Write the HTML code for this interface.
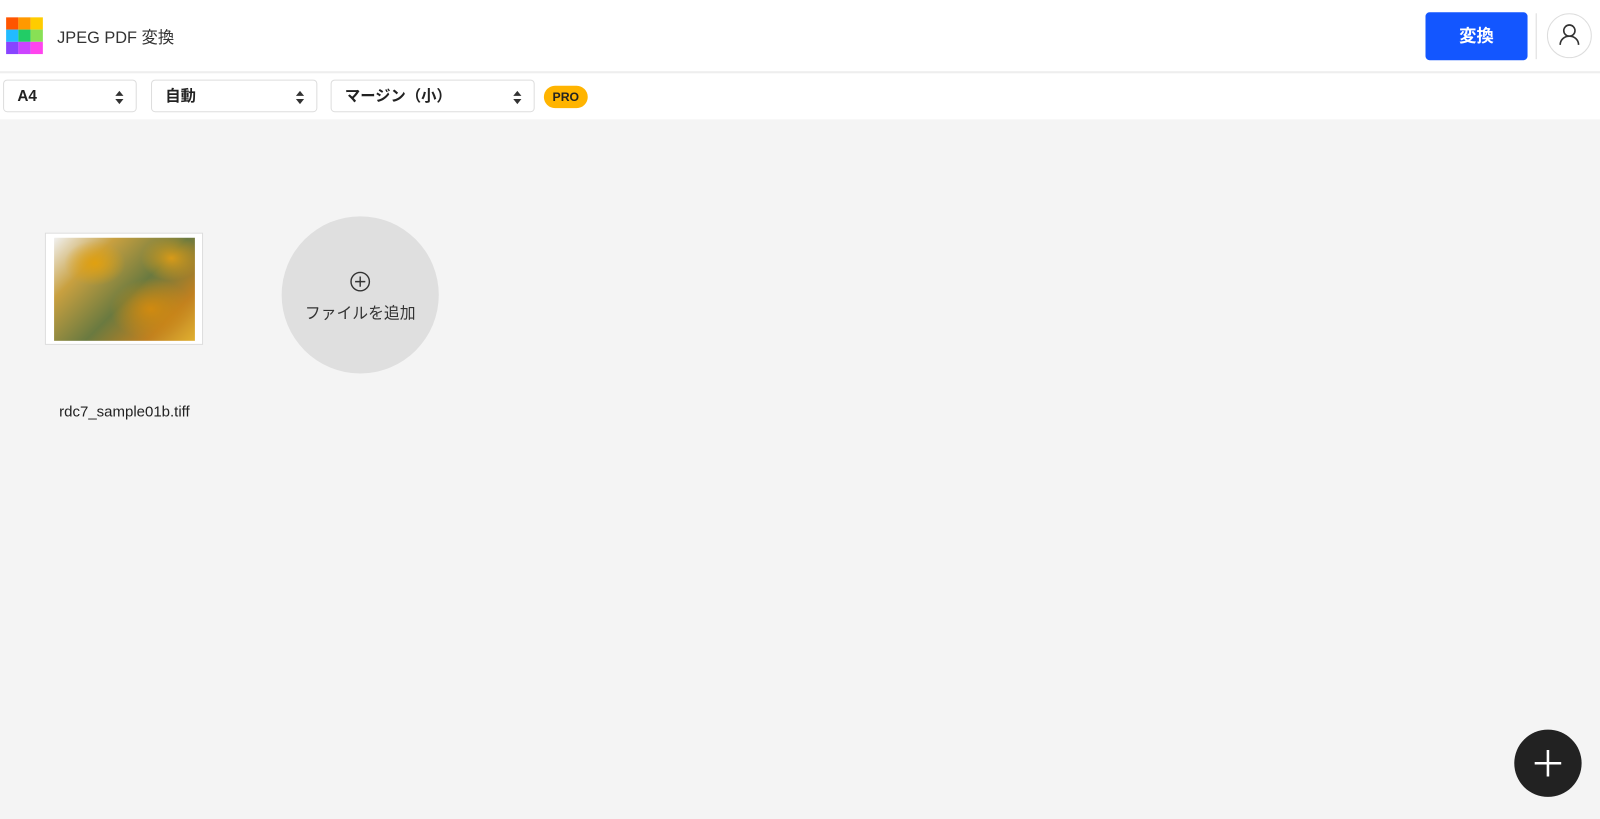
<!DOCTYPE html>
<html><head><meta charset="utf-8"><style>
*{box-sizing:border-box;margin:0;padding:0}
body{width:1600px;height:819px;background:#f4f4f4;font-family:"Liberation Sans","Noto Sans CJK JP",sans-serif;position:relative;overflow:hidden;color:#222}
.w{position:absolute;left:0;top:0;width:1568px;height:803px;transform:scale(1.0204);transform-origin:0 0}
.hdr{position:absolute;left:0;top:0;width:1568px;height:71px;background:#fff;border-bottom:1px solid #e6e6e6}
.logo{position:absolute;left:6px;top:17px;width:36px;height:36px;display:grid;grid-template-columns:repeat(3,12px)}
.title{position:absolute;left:56px;top:23px;font-size:16px;color:#333}
.btn{position:absolute;left:1397px;top:12px;width:100px;height:47px;background:#1356ff;border-radius:4px;color:#fff;font-size:17px;font-weight:bold;text-align:center;line-height:47px}
.sep{position:absolute;left:1505px;top:13px;width:1px;height:45px;background:#ddd}
.av{position:absolute;left:1516px;top:13px;width:44px;height:44px;border:1px solid #ddd;border-radius:50%}
.tb{position:absolute;left:0;top:72px;width:1568px;height:45px;background:#fff}
.sel{position:absolute;top:6px;height:32px;border:1px solid #ddd;border-radius:4px;font-size:15px;font-weight:bold;line-height:31px;padding-left:13px}
.sel::after{content:"";position:absolute;right:12px;top:10px;border:4px solid transparent;border-bottom:5px solid #333;border-top:0}
.sel::before{content:"";position:absolute;right:12px;top:18px;border:4px solid transparent;border-top:5px solid #333;border-bottom:0}
.pro{position:absolute;left:533px;top:12px;width:43px;height:22px;background:#ffb400;border-radius:11px;font-size:12px;font-weight:bold;text-align:center;line-height:22px;color:#222}
.thumb{position:absolute;left:44px;top:228px;width:155px;height:110px;background:#fff;border:1px solid #ddd}
.img{position:absolute;left:8px;top:4px;width:138px;height:101px;background:
radial-gradient(ellipse 40px 30px at 95px 70px,#d08a10,transparent),
radial-gradient(ellipse 30px 22px at 40px 25px,#e0a010,transparent),
radial-gradient(ellipse 30px 22px at 115px 20px,#d89a18,transparent),
linear-gradient(135deg,#f0f0f0 0%,#c8a040 25%,#6a7a40 55%,#c08020 80%,#e0b030 100%)}
.fn{position:absolute;left:58px;top:396px;font-size:14.7px;color:#222}
.add{position:absolute;left:276px;top:212px;width:154px;height:154px;border-radius:50%;background:#dfdfdf;text-align:center}
.add .t{position:absolute;top:83px;width:100%;font-size:15.5px;color:#333}
.fab{position:absolute;left:1484px;top:715px;width:66px;height:66px;border-radius:50%;background:#222}
</style></head><body><div class="w">
<div class="hdr">
<div class="logo"><i style="background:#ff5500"></i><i style="background:#ff9900"></i><i style="background:#ffcc00"></i><i style="background:#22bbff"></i><i style="background:#22cc66"></i><i style="background:#88e055"></i><i style="background:#8844ff"></i><i style="background:#cc44ff"></i><i style="background:#ff44ee"></i></div>
<div class="title">JPEG PDF 変換</div>
<div class="btn">変換</div>
<div class="sep"></div>
<div class="av"><svg width="44" height="44" viewBox="0 0 44 44" fill="none" stroke="#333" stroke-width="1.6" style="position:absolute;left:-1px;top:-1px"><circle cx="22" cy="17" r="5.5"/><path d="M13 31c0-5 4-8.5 9-8.5s9 3.5 9 8.5"/></svg></div>
</div>
<div class="tb">
<div class="sel" style="left:3px;width:131px">A4</div>
<div class="sel" style="left:148px;width:163px">自動</div>
<div class="sel" style="left:324px;width:200px">マージン（小）</div>
<div class="pro">PRO</div>
</div>
<div class="thumb"><div class="img"></div></div>
<div class="fn">rdc7_sample01b.tiff</div>
<div class="add"><svg width="22" height="22" viewBox="0 0 22 22" style="position:absolute;left:66px;top:53px" fill="none" stroke="#333" stroke-width="1.4"><circle cx="11" cy="11" r="9"/><path d="M11 6v10M6 11h10"/></svg><div class="t">ファイルを追加</div></div>
<div class="fab"><svg width="66" height="66" viewBox="0 0 66 66" stroke="#fff" stroke-width="2.5"><path d="M33 20v26M20 33h26"/></svg></div>
</div></body></html>
